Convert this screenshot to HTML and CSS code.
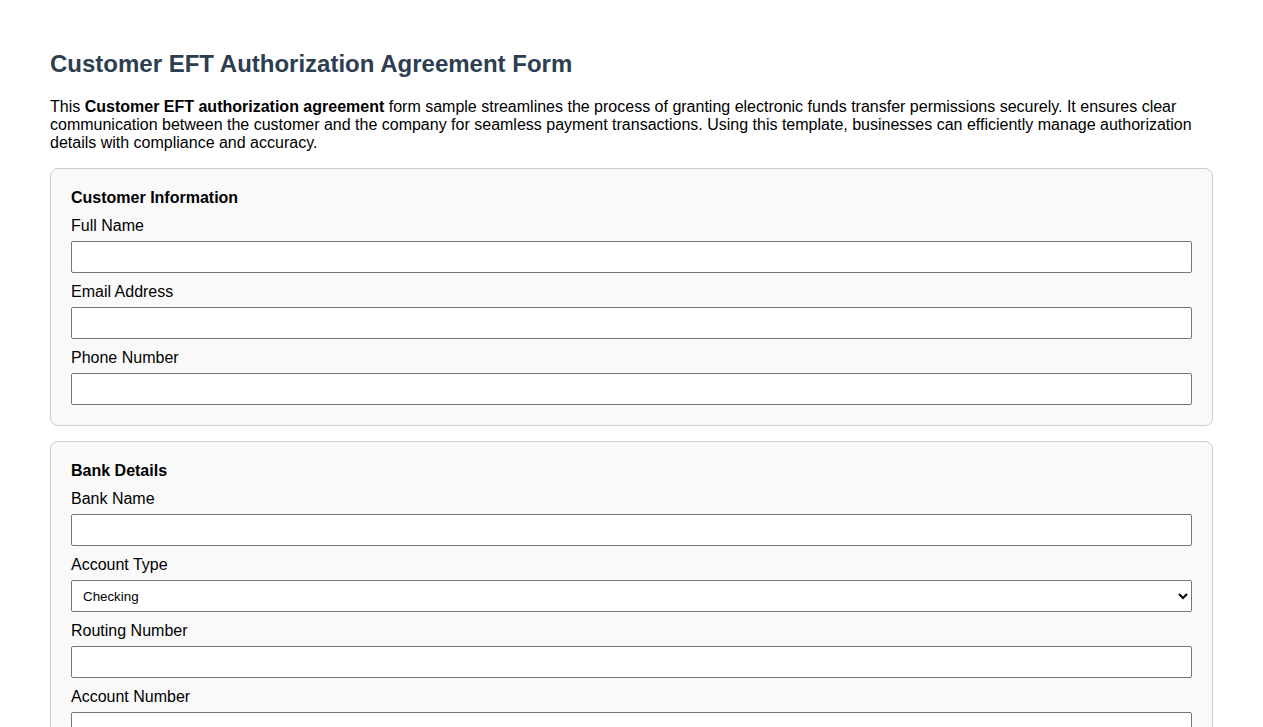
FILE: index.html
```html
<!DOCTYPE html>
<html lang="en">
<head>
<meta charset="utf-8">
<title>Customer EFT Authorization Agreement Form</title>
<link rel="stylesheet" href="styles.css">
</head>
<body>
<main class="page">
  <h1 class="title">Customer EFT Authorization Agreement Form</h1>
  <p class="intro">This <strong>Customer EFT authorization agreement</strong> form sample streamlines the process of granting electronic funds transfer permissions securely. It ensures clear communication between the customer and the company for seamless payment transactions. Using this template, businesses can efficiently manage authorization details with compliance and accuracy.</p>
  <form class="form">
    <section class="section">
      <h3 class="section-title">Customer Information</h3>
      <div class="field">
        <label class="label" for="fullName">Full Name</label>
        <input class="control" type="text" id="fullName">
      </div>
      <div class="field">
        <label class="label" for="email">Email Address</label>
        <input class="control" type="email" id="email">
      </div>
      <div class="field">
        <label class="label" for="phone">Phone Number</label>
        <input class="control" type="tel" id="phone">
      </div>
    </section>
    <section class="section">
      <h3 class="section-title">Bank Details</h3>
      <div class="field">
        <label class="label" for="bankName">Bank Name</label>
        <input class="control" type="text" id="bankName">
      </div>
      <div class="field">
        <label class="label" for="accountType">Account Type</label>
        <select class="control select" id="accountType">
          <option>Checking</option>
          <option>Savings</option>
        </select>
      </div>
      <div class="field">
        <label class="label" for="routing">Routing Number</label>
        <input class="control" type="text" id="routing">
      </div>
      <div class="field">
        <label class="label" for="account">Account Number</label>
        <input class="control" type="text" id="account">
      </div>
    </section>
  </form>
</main>
</body>
</html>
```
FILE: styles.css
```css
html, body {
  margin: 0;
  padding: 0;
  background: #ffffff;
}
body {
  font-family: "Liberation Sans", Arial, sans-serif;
  font-size: 16px;
  color: #000;
}
.page {
  padding: 50px 50px 40px;
}
.title {
  margin: 0 0 20px;
  font-size: 24px;
  line-height: 28px;
  font-weight: bold;
  color: #2c3e50;
}
.intro {
  margin: 0 0 16px;
  line-height: 18px;
}
.form {
  display: flex;
  flex-direction: column;
  gap: 15px;
}
.section {
  border: 1px solid #cccccc;
  border-radius: 8px;
  background: #f9f9f9;
  padding: 20px 20px 20px;
  display: flex;
  flex-direction: column;
  gap: 10px;
}
.section-title {
  margin: 0;
  font-size: 16px;
  line-height: 18px;
  font-weight: bold;
}
.field {
  display: flex;
  flex-direction: column;
  gap: 6px;
}
.label {
  line-height: 18px;
}
.control {
  box-sizing: border-box;
  width: 100%;
  height: 32px;
  padding: 8px;
  border: 1px solid #767676;
  border-radius: 2px;
  background: #fff;
  font-family: "Liberation Sans", Arial, sans-serif;
  font-size: 13.33px;
  margin: 0;
}
.select {
  padding: 0 4px 0 7px;
  color: #000;
}
```
